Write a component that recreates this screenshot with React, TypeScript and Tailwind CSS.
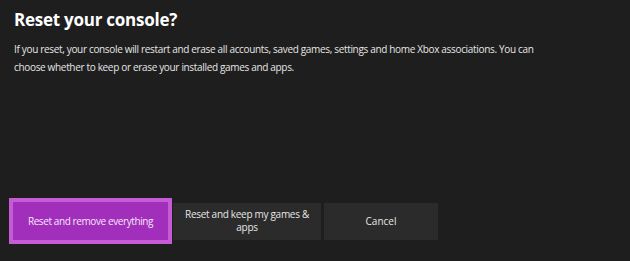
export default function App() {
  return (
    <div className="w-[630px] h-[261px] bg-[#1e1e1e] flex flex-col overflow-hidden" style={{ fontFamily: '"Open Sans", "Noto Sans", sans-serif' }}>
      <div className="pl-[14px] pt-[8px]">
        <h1 className="text-[17px] font-bold text-white leading-[24px] tracking-[-0.25px]">Reset your console?</h1>
        <p className="mt-[8px] text-[10px] leading-[18px] text-[#e6e6e6] tracking-[-0.33px]">
          If you reset, your console will restart and erase all accounts, saved games, settings and home Xbox associations. You can
          <br />
          choose whether to keep or erase your installed games and apps.
        </p>
      </div>
      <div className="mt-auto mb-[17px] pl-[9px] flex items-center">
        <div className="w-[163px] h-[46px] bg-[#a22fbc] border-[4px] border-[#c55bd5] flex items-center justify-center text-[10px] text-[#f5e6f8] tracking-[-0.4px]">
          Reset and remove everything
        </div>
        <div className="ml-[1px] w-[148px] h-[37px] bg-[#2b2b2b] flex items-center justify-center text-center text-[10px] leading-[13px] text-[#e6e6e6] px-2 tracking-[-0.3px]">
          Reset and keep my games &amp; apps
        </div>
        <div className="ml-[3px] w-[114px] h-[37px] bg-[#2b2b2b] flex items-center justify-center text-[10px] text-[#e6e6e6]">
          Cancel
        </div>
      </div>
    </div>
  );
}
